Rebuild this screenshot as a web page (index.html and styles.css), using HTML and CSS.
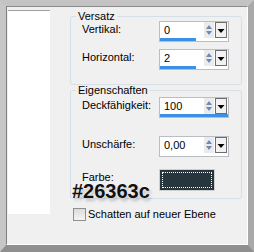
FILE: index.html
```html
<!DOCTYPE html>
<html lang="de">
<head>
    <meta charset="UTF-8">
    <title>Schatten</title>
    <link rel="stylesheet" href="styles.css">
</head>
<body>
    <div class="window">
        <div class="frame">
            <!-- Vorschau links -->
            <div class="preview"></div>

            <div class="settings">
                <fieldset class="group group-offset">
                    <legend>Versatz</legend>

                    <div class="row">
                        <span class="row-label">Vertikal:</span>
                        <div class="field">
                            <div class="field-top">
                                <span class="field-value">0</span>
                                <span class="spin">
                                    <svg width="10" height="16" viewBox="0 0 10 16"><path d="M5 3 L8 7 L2 7 Z M2 9 L8 9 L5 13 Z" fill="#6f86bb"/></svg>
                                </span>
                                <span class="drop">
                                    <svg width="10" height="14" viewBox="0 0 10 14"><path d="M1.5 6 L8.5 6 L5 10 Z" fill="#000"/></svg>
                                </span>
                            </div>
                            <div class="level"><div class="level-fill" style="width: 53%"></div></div>
                        </div>
                    </div>

                    <div class="row">
                        <span class="row-label">Horizontal:</span>
                        <div class="field">
                            <div class="field-top">
                                <span class="field-value">2</span>
                                <span class="spin">
                                    <svg width="10" height="16" viewBox="0 0 10 16"><path d="M5 3 L8 7 L2 7 Z M2 9 L8 9 L5 13 Z" fill="#6f86bb"/></svg>
                                </span>
                                <span class="drop">
                                    <svg width="10" height="14" viewBox="0 0 10 14"><path d="M1.5 6 L8.5 6 L5 10 Z" fill="#000"/></svg>
                                </span>
                            </div>
                            <div class="level"><div class="level-fill" style="width: 53%"></div></div>
                        </div>
                    </div>
                </fieldset>

                <fieldset class="group group-props">
                    <legend>Eigenschaften</legend>

                    <div class="row">
                        <span class="row-label">Deckfähigkeit:</span>
                        <div class="field">
                            <div class="field-top">
                                <span class="field-value">100</span>
                                <span class="spin">
                                    <svg width="10" height="16" viewBox="0 0 10 16"><path d="M5 3 L8 7 L2 7 Z M2 9 L8 9 L5 13 Z" fill="#6f86bb"/></svg>
                                </span>
                                <span class="drop">
                                    <svg width="10" height="14" viewBox="0 0 10 14"><path d="M1.5 6 L8.5 6 L5 10 Z" fill="#000"/></svg>
                                </span>
                            </div>
                            <div class="level"><div class="level-fill" style="width: 100%"></div></div>
                        </div>
                    </div>

                    <div class="row row-blur">
                        <span class="row-label">Unschärfe:</span>
                        <div class="field">
                            <div class="field-top">
                                <span class="field-value">0,00</span>
                                <span class="spin">
                                    <svg width="10" height="16" viewBox="0 0 10 16"><path d="M5 3 L8 7 L2 7 Z M2 9 L8 9 L5 13 Z" fill="#6f86bb"/></svg>
                                </span>
                                <span class="drop">
                                    <svg width="10" height="14" viewBox="0 0 10 14"><path d="M1.5 6 L8.5 6 L5 10 Z" fill="#000"/></svg>
                                </span>
                            </div>
                            <div class="level"></div>
                        </div>
                    </div>

                    <div class="row row-color">
                        <span class="row-label">Farbe:</span>
                        <div class="swatch"><div class="swatch-focus"></div></div>
                        <span class="hex-note">#26363c</span>
                    </div>
                </fieldset>

                <label class="check-row">
                    <span class="checkbox"></span>
                    <span>Schatten auf neuer Ebene</span>
                </label>
            </div>
        </div>
    </div>
</body>
</html>
```

FILE: styles.css
```css
body {
    margin: 0;
    font-family: "Liberation Sans", Arial, sans-serif;
    font-size: 11px;
    color: #000;
}
.window {
    width: 254px;
    height: 252px;
    box-sizing: border-box;
    border-top: 6px solid #c3c3c3;
    border-left: 6px solid #c6c6c6;
    border-right: 6px solid #a9a9a9;
    border-bottom: 7px solid #8f8f8f;
}
.frame {
    height: 100%;
    box-sizing: border-box;
    display: flex;
    align-items: flex-start;
    background-color: #f0f0f0;
    border-top: 1px solid #8a8a8a;
    border-left: 1px solid #7d7d7d;
    border-right: 1px solid #fff;
    border-bottom: 1px solid #fff;
}
.preview {
    width: 42px;
    height: 204px;
    margin: 3px 0 0 1px;
    background-color: #fff;
    border-top: 1px solid #a0a0a0;
    box-sizing: border-box;
}
.settings {
    width: 172px;
    margin: 5px 0 0 20px;
}
.group {
    margin: 0;
    padding: 0;
    min-width: 0;
    border: 1px solid #d5dfe5;
    border-radius: 3px;
}
.group legend {
    margin-left: 5px;
    padding: 0 2px;
    line-height: 9px;
}
.group-offset {
    padding-bottom: 14px;
}
.group-props {
    margin-top: 1px;
    padding-top: 2px;
    padding-bottom: 7px;
}
.row {
    display: flex;
    align-items: flex-start;
    position: relative;
    height: 21px;
    margin-left: 11px;
}
.row + .row {
    margin-top: 7px;
}
.group-props .row + .row {
    margin-top: 18px;
}
.group-props .row.row-color {
    margin-top: 12px;
    height: 22px;
}
.row-label {
    width: 77px;
    line-height: 16px;
}
.row-color .row-label {
    line-height: 12px;
    padding-top: 2px;
}
.field {
    width: 70px;
    height: 21px;
    box-sizing: border-box;
    border: 1px solid #b9bdc4;
    background-color: #fff;
    display: flex;
    flex-direction: column;
}
.field-top {
    display: flex;
    height: 16px;
}
.field-value {
    flex: 1;
    padding-left: 4px;
    line-height: 16px;
}
.spin {
    width: 10px;
    height: 16px;
    margin-right: 1px;
    background-color: #ebebeb;
}
.spin svg,
.drop svg {
    display: block;
}
.drop {
    width: 10px;
    height: 14px;
    margin-right: 1px;
    border: 1px solid #6e6e6e;
    background-color: #f2f2f2;
}
.level {
    height: 3px;
}
.level-fill {
    height: 100%;
    background-color: #3c91e6;
}
.swatch {
    width: 56px;
    height: 22px;
    box-sizing: border-box;
    background-color: #26363c;
    border: 1px solid #cfcfcf;
    padding: 2px;
}
.swatch-focus {
    height: 100%;
    box-sizing: border-box;
    border: 1px dotted #fff;
}
.hex-note {
    position: absolute;
    left: -10px;
    top: 15px;
    font-size: 20px;
    line-height: 15px;
    font-weight: bold;
    color: #111;
    text-shadow: 0 0 2px #fff, 2px 3px 3px rgba(0, 0, 0, 0.2);
}
.check-row {
    display: flex;
    align-items: center;
    margin: 9px 0 0 3px;
    line-height: 13px;
}
.checkbox {
    width: 13px;
    height: 13px;
    box-sizing: border-box;
    margin-right: 2px;
    border: 1px solid #8e8f8f;
    background: linear-gradient(#dcdcdc, #f4f4f4);
}
```
